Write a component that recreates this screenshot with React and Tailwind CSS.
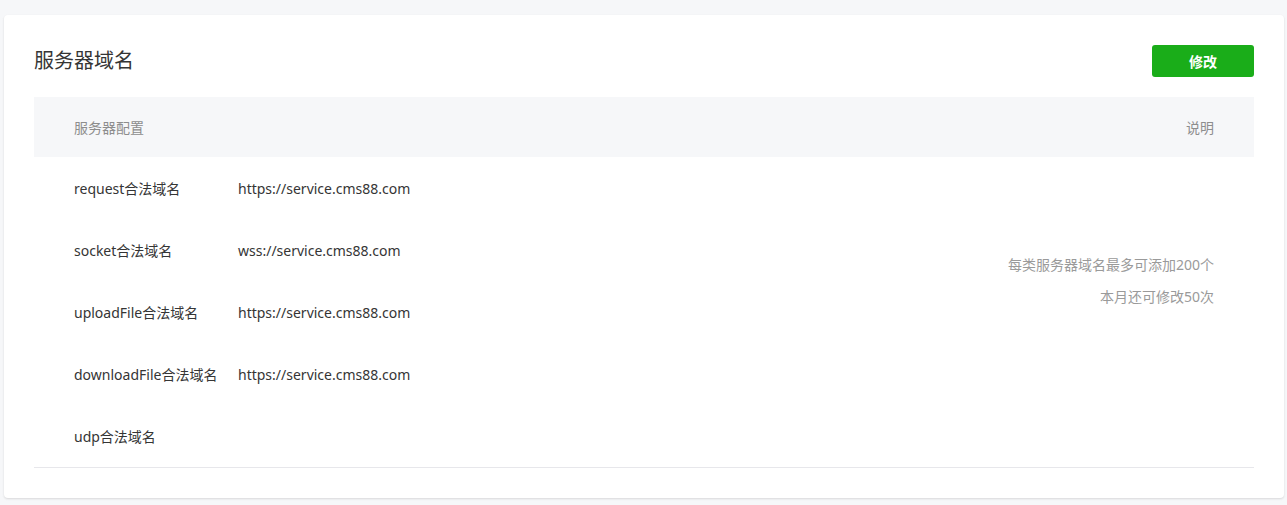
import React from "react";

const rows = [
    { name: "request合法域名", value: "https://service.cms88.com" },
    { name: "socket合法域名", value: "wss://service.cms88.com" },
    { name: "uploadFile合法域名", value: "https://service.cms88.com" },
    { name: "downloadFile合法域名", value: "https://service.cms88.com" },
    { name: "udp合法域名", value: "" },
];

export default function App() {
    return (
        <div
            className="bg-[#f6f7f9] min-h-screen pt-[15px] pl-[4px] pr-[3px] pb-[8px]"
            style={{ fontFamily: '"Noto Sans", "Noto Sans CJK SC", sans-serif' }}
        >
            <div className="bg-white rounded-[4px] shadow-[0_1px_2px_rgba(150,150,150,0.3)] px-[30px] pt-[30px] pb-[30px]">
                {/* header */}
                <div className="flex items-center justify-between mb-[20px]">
                    <h2 className="text-[20px] text-[#353535] leading-[32px]">服务器域名</h2>
                    <button className="bg-[#1aad19] text-white text-[14px] font-bold w-[102px] h-[32px] rounded-[3px]">
                        修改
                    </button>
                </div>

                {/* table */}
                <div className="flex items-center justify-between bg-[#f6f7f9] h-[60px] px-[40px] text-[14px] text-[#8d8d8d]">
                    <span>服务器配置</span>
                    <span>说明</span>
                </div>
                <div className="flex justify-between border-b border-[#e7e7eb] px-[40px]">
                    <div className="flex flex-col">
                        {rows.map((row, index) => (
                            <div key={index} className="flex items-center h-[62px] text-[14px] text-[#353535]">
                                <span className="w-[164px]">{row.name}</span>
                                <span>{row.value}</span>
                            </div>
                        ))}
                    </div>
                    <div className="h-[248px] flex flex-col justify-center items-end text-[14px] text-[#9a9a9a] leading-[32px]">
                        <p>每类服务器域名最多可添加200个</p>
                        <p>本月还可修改50次</p>
                    </div>
                </div>
            </div>
        </div>
    );
}
